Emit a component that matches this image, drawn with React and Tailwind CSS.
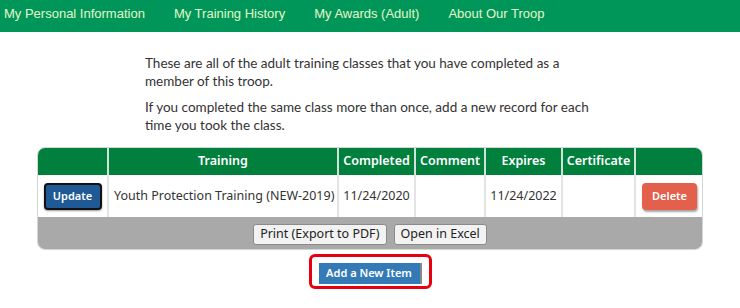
import React from 'react';

const navItems = ['My Personal Information', 'My Training History', 'My Awards (Adult)', 'About Our Troop'];

const cols = [
  { label: '', w: 'w-[70px]' },
  { label: 'Training', w: 'w-[230px]' },
  { label: 'Completed', w: 'w-[77px]' },
  { label: 'Comment', w: 'w-[70px]' },
  { label: 'Expires', w: 'w-[77px]' },
  { label: 'Certificate', w: 'w-[73px]' },
  { label: '', w: 'w-[68px]' },
];

const App = () => {
  return (
    <div className="w-[740px] h-[308px] bg-white overflow-hidden">
      <nav className="h-[32px] bg-[#00965a] flex items-start pt-[4px] pl-[4px] gap-[29px] text-[13px] text-[#e3f7c8] font-['Liberation_Sans',sans-serif]">
        {navItems.map((item) => (
          <span key={item}>{item}</span>
        ))}
      </nav>

      <div className="w-[450px] mx-auto mt-[22px] text-[13.5px] leading-[18px] text-[#333] font-['Lato',sans-serif]">
        <p className="mb-[8px]">
          These are all of the adult training classes that you have completed as a member of this troop.
        </p>
        <p>If you completed the same class more than once, add a new record for each time you took the class.</p>
      </div>

      <div className="mx-[37px] mt-[13px] border border-[#cfd8d2] rounded-[8px] overflow-hidden font-['Noto_Sans',sans-serif]">
        <table className="w-full table-fixed border-collapse text-[12.5px]">
          <thead>
            <tr className="bg-[#007f3d] text-white h-[27px]">
              {cols.map((c, i) => (
                <th key={i} className={`${c.w} font-semibold border-r-2 border-[#cfe3d6] last:border-r-0 p-0`}>
                  {c.label}
                </th>
              ))}
            </tr>
          </thead>
          <tbody>
            <tr className="h-[42px] bg-white text-[#333]">
              <td className="border-r-2 border-[#e4e4e4] text-center">
                <button className="w-[58px] h-[27px] bg-[#1f5a96] text-white text-[11px] font-semibold border-2 border-[#111] rounded-[4px] shadow-[0_1px_2px_rgba(0,0,0,0.4)]">
                  Update
                </button>
              </td>
              <td className="border-r-2 border-[#e4e4e4] px-[5px] whitespace-nowrap">Youth Protection Training (NEW-2019)</td>
              <td className="border-r-2 border-[#e4e4e4] text-center">11/24/2020</td>
              <td className="border-r-2 border-[#e4e4e4]"></td>
              <td className="border-r-2 border-[#e4e4e4] text-center">11/24/2022</td>
              <td className="border-r-2 border-[#e4e4e4]"></td>
              <td className="text-center">
                <button className="w-[55px] h-[27px] bg-[#e2604c] text-white text-[11px] font-semibold rounded-[4px] shadow-[1px_2px_2px_rgba(0,0,0,0.35)]">
                  Delete
                </button>
              </td>
            </tr>
          </tbody>
        </table>
        <div className="bg-[#a9a9a9] h-[32px] flex items-center justify-center gap-[7px] pt-[2px]">
          <button className="h-[21px] px-[6px] bg-[#f2f2f2] border border-[#8a8a8a] rounded-[3px] text-[12.5px] leading-none text-[#222]">
            Print (Export to PDF)
          </button>
          <button className="h-[21px] px-[6px] bg-[#f2f2f2] border border-[#8a8a8a] rounded-[3px] text-[12.5px] leading-none text-[#222]">
            Open in Excel
          </button>
        </div>
      </div>

      <div className="flex justify-center mt-[4px]">
        <div className="border-[3px] border-[#e8000f] rounded-[6px] px-[7px] py-[2px] bg-white">
          <button className="h-[21px] w-[103px] bg-[#337ab7] border-r-2 border-[#888] text-white text-[11px] font-semibold font-['Noto_Sans',sans-serif]">
            Add a New Item
          </button>
        </div>
      </div>
    </div>
  );
};

export default App;
